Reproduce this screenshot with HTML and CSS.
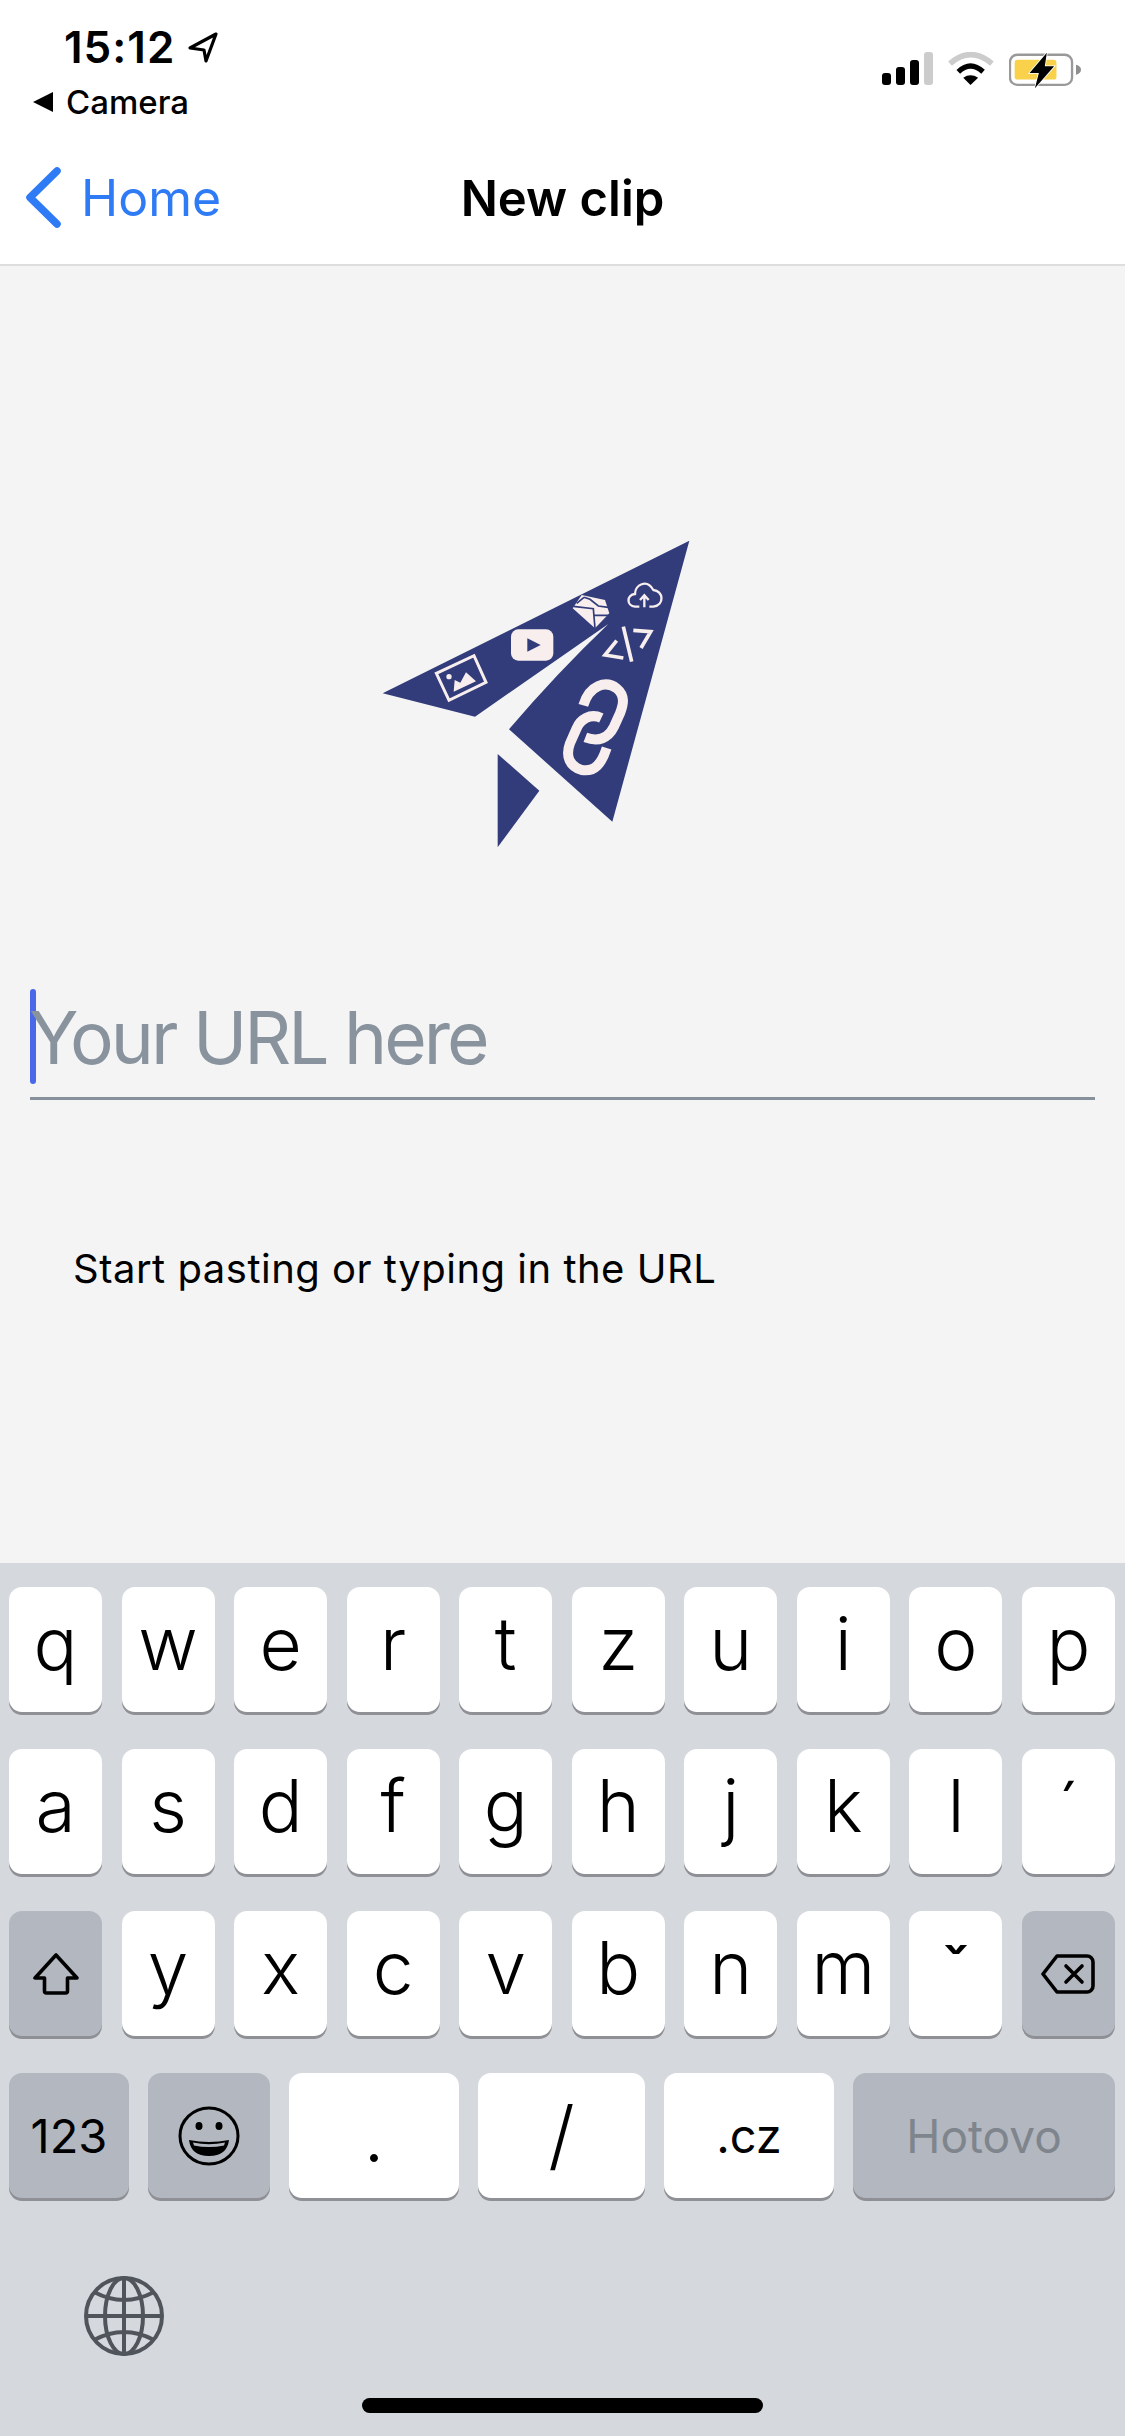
FILE: index.html
```html
<!DOCTYPE html>
<html lang="en">
<head>
  <meta charset="UTF-8">
  <title>New clip</title>
  <link rel="stylesheet" href="styles.css">
</head>
<body>
  <div class="screen">
    <header class="top">
      <div class="status">
        <div class="status-left">
          <div class="time-row">
            <span class="time">15:12</span>
            <svg class="loc" viewBox="0 0 32 32"><path d="M29 3 3 17l14 2 2 11z" fill="none" stroke="#000" stroke-width="3.2" stroke-linejoin="round"/></svg>
          </div>
          <div class="back-app">
            <svg class="back-tri" viewBox="0 0 20 20"><path d="M20 0v20L0 10z" fill="#000"/></svg>
            <span>Camera</span>
          </div>
        </div>
        <div class="status-icons">
          <div class="signal">
            <i class="bar bar1"></i><i class="bar bar2"></i><i class="bar bar3"></i><i class="bar bar4"></i>
          </div>
          <svg class="wifi" viewBox="295 65 137 100">
            <path d="M300 100Q362 46 427 100" fill="none" stroke="#ccc" stroke-width="17"/>
            <path d="M325 125Q362 90 400 125" fill="none" stroke="#000" stroke-width="16"/>
            <path d="M340 143Q362 128 385 143L362 165z" fill="#000"/>
          </svg>
          <svg class="battery" viewBox="478 62 220 108">
            <rect x="481" y="70" width="187" height="91" rx="22" fill="none" stroke="#999" stroke-width="7"/>
            <rect x="495" y="85" width="126" height="60" rx="9" fill="#f9d14a"/>
            <path d="M680 100q15 4 15 15t-15 15z" fill="#8f8f8f"/>
            <path d="M592 64 540 125h28l-12 46 58-66h-28z" fill="#000" stroke="#fff" stroke-width="5" paint-order="stroke"/>
          </svg>
        </div>
      </div>
      <nav class="nav">
        <a class="nav-back">
          <svg class="chevron" viewBox="0 0 36 61"><path d="M32 4 5 30.500 32 57" fill="none" stroke="#2f7bf6" stroke-width="7.500" stroke-linecap="round" stroke-linejoin="round"/></svg>
          <span>Home</span>
        </a>
        <h1 class="nav-title">New clip</h1>
      </nav>
    </header>

    <main class="content">
      <svg class="logo" viewBox="0 0 1050 1020">
        <path d="M68 520 988 62 757 905 447 628Q590 460 745 312L345 590z" fill="#323c7a"/>
        <path d="M413 702 538 812 413 982z" fill="#323c7a"/>
        <!-- picture -->
        <path d="M229 460 342 407 378 487 267 541z" fill="none" stroke="#f8eeee" stroke-width="9"/>
        <circle cx="267" cy="470" r="8" fill="#f8eeee"/>
        <path d="M281 515 284 480 301 488 318 457 348 484z" fill="#f8eeee"/>
        <!-- video -->
        <rect x="453" y="328" width="127" height="94" rx="22" fill="#f8eeee"/>
        <path d="M502 355 542 375 502 395z" fill="#323c7a"/>
        <!-- gem -->
        <path d="M665 225 735 240 748 280 705 325 638 265z" fill="#f8eeee"/>
        <path d="M640 259 700 266 705 325M704 286H748M672 232 690 238 715 258 745 262M650 250 672 232" fill="none" stroke="#323c7a" stroke-width="5"/>
        <!-- cloud -->
        <path d="M838 260H825C800 258 798 225 825 222 825 195 860 175 880 210 910 212 915 255 880 260H868" fill="none" stroke="#f8eeee" stroke-width="7"/>
        <path d="M853 262V228M840 240 853 226 866 240" fill="none" stroke="#f8eeee" stroke-width="7"/>
        <!-- code -->
        <path d="M770 362 735 405 790 414M790 320 815 425M820 331 872 335 843 384" fill="none" stroke="#f8eeee" stroke-width="11"/>
        <!-- chain -->
        <path d="M670 556C688 495 738 480 770 505 797 527 790 555 780 580L762 620C745 655 715 667 676 652" fill="none" stroke="#f8eeee" stroke-width="30"/>
        <path d="M724 594C690 578 660 600 650 625L630 670C615 710 630 740 665 750 705 757 725 730 740 684" fill="none" stroke="#f8eeee" stroke-width="30"/>
      </svg>

      <div class="url-field">
        <i class="caret"></i>
        <span class="placeholder">Your URL here</span>
      </div>
      <p class="hint">Start pasting or typing in the URL</p>
    </main>

    <section class="keyboard">
      <div class="row">
        <div class="key">q</div><div class="key">w</div><div class="key">e</div><div class="key">r</div><div class="key">t</div>
        <div class="key">z</div><div class="key">u</div><div class="key">i</div><div class="key">o</div><div class="key">p</div>
      </div>
      <div class="row">
        <div class="key">a</div><div class="key">s</div><div class="key">d</div><div class="key">f</div><div class="key">g</div>
        <div class="key">h</div><div class="key">j</div><div class="key">k</div><div class="key">l</div><div class="key acute">´</div>
      </div>
      <div class="row">
        <div class="key dark icon">
          <svg class="shift" viewBox="0 0 46 42"><path d="M23 2 2 25h9.500v13a2 2 0 0 0 2 2h19a2 2 0 0 0 2-2V25H44z" fill="none" stroke="#000" stroke-width="3.600" stroke-linejoin="round"/></svg>
        </div>
        <div class="key">y</div><div class="key">x</div><div class="key">c</div><div class="key">v</div><div class="key">b</div>
        <div class="key">n</div><div class="key">m</div>
        <div class="key caron">ˇ</div>
        <div class="key dark icon">
          <svg class="delete" viewBox="0 0 54 40"><path d="M16 2H46a6 6 0 0 1 6 6V32a6 6 0 0 1-6 6H16L2 20z" fill="none" stroke="#000" stroke-width="3.600" stroke-linejoin="round"/><path d="M25 12 41 28M41 12 25 28" stroke="#000" stroke-width="3.600" stroke-linecap="round"/></svg>
        </div>
      </div>
      <div class="row row-bottom">
        <div class="key dark small w-num">123</div>
        <div class="key dark icon w-emoji">
          <svg class="emoji" viewBox="0 0 62 60">
            <ellipse cx="31" cy="30" rx="29" ry="28" fill="none" stroke="#000" stroke-width="3"/>
            <ellipse cx="21" cy="20" rx="3.500" ry="4" fill="#000"/>
            <ellipse cx="41" cy="20" rx="3.500" ry="4" fill="#000"/>
            <path d="M11 34Q31 38 51 34 49 50 31 50 13 50 11 34z" fill="#000"/>
            <path d="M15 36.500Q31 40 47 36.500L46 39.500Q31 42.500 16 39.500z" fill="#b3b7c0"/>
          </svg>
        </div>
        <div class="key punct w-dot">.</div>
        <div class="key punct w-slash">/</div>
        <div class="key small w-cz">.cz</div>
        <div class="key dark small done w-done">Hotovo</div>
      </div>
      <div class="kb-bottom">
        <svg class="globe" viewBox="0 0 80 80">
          <g fill="none" stroke="#50555c" stroke-width="4">
            <circle cx="40" cy="40" r="38"/>
            <ellipse cx="40" cy="40" rx="19" ry="38"/>
            <path d="M40 2V78M2 40H78M10 16Q40 32 70 16M10 64Q40 48 70 64"/>
          </g>
        </svg>
        <i class="home-bar"></i>
      </div>
    </section>
  </div>
</body>
</html>
```

FILE: styles.css
```css
body {
  margin: 0;
  font-family: Inter, "Liberation Sans", sans-serif;
  color: #000;
}
.screen {
  width: 1125px;
  height: 2436px;
  display: flex;
  flex-direction: column;
  background: #f4f4f4;
  overflow: hidden;
}

/* status bar + nav */
.top {
  height: 264px;
  background: #fff;
  border-bottom: 2px solid #dedede;
}
.status {
  height: 130px;
  display: flex;
  justify-content: space-between;
}
.status-left {
  padding: 25px 0 0 33px;
}
.time-row {
  display: flex;
  align-items: center;
  gap: 12px;
  padding-left: 31px;
}
.time {
  font-size: 44px;
  line-height: 44px;
  font-weight: 600;
  letter-spacing: 1px;
}
.loc {
  width: 32px;
  height: 32px;
}
.back-app {
  display: flex;
  align-items: center;
  gap: 13px;
  margin-top: 13px;
  font-size: 33px;
  line-height: 40px;
  font-weight: 500;
}
.back-tri {
  width: 20px;
  height: 20px;
}
.status-icons {
  display: flex;
  align-items: flex-start;
  padding: 52px 43px 0 0;
  gap: 15px;
}
.signal {
  display: flex;
  align-items: flex-end;
  gap: 5px;
  height: 33px;
}
.bar {
  width: 9px;
  border-radius: 3px;
  background: #000;
}
.bar1 { height: 12px; }
.bar2 { height: 18px; }
.bar3 { height: 25px; }
.bar4 { height: 33px; background: #ccc; }
.wifi {
  width: 46px;
  height: 33px;
}
.battery {
  width: 73px;
  height: 36px;
}
.nav {
  height: 134px;
  box-sizing: border-box;
  padding-top: 2px;
  display: flex;
  align-items: center;
  justify-content: center;
  position: relative;
}
.nav-back {
  position: absolute;
  left: 25px;
  top: 37px;
  display: flex;
  align-items: center;
  gap: 20px;
  color: #2f7bf6;
  font-size: 50px;
}
.chevron {
  width: 36px;
  height: 61px;
}
.nav-title {
  margin: 0;
  font-size: 49px;
  font-weight: 600;
}

/* main */
.content {
  flex: 1;
}
.logo {
  display: block;
  width: 350px;
  height: 340px;
  margin: 254px 0 0 360px;
}
.url-field {
  display: flex;
  height: 108px;
  margin: 129px 30px 0;
  border-bottom: 3px solid #87919c;
}
.caret {
  width: 6px;
  height: 95px;
  border-radius: 3px;
  background: #4a68e8;
}
.placeholder {
  margin: 5px 0 0 -7px;
  font-size: 73px;
  line-height: 88px;
  color: #89939e;
  letter-spacing: -3px;
}
.hint {
  margin: 145px 0 0 73px;
  font-size: 40px;
  line-height: 48px;
  letter-spacing: 0.5px;
}

/* keyboard */
.keyboard {
  height: 873px;
  box-sizing: border-box;
  padding-top: 24px;
  background: #d5d8dd;
}
.row {
  display: flex;
  gap: 19.5px;
  padding: 0 10px 0 9px;
  margin-bottom: 37px;
}
.row-bottom {
  gap: 19px;
  margin-bottom: 0;
}
.key {
  flex: 1;
  height: 125px;
  box-sizing: border-box;
  padding-bottom: 12px;
  display: flex;
  align-items: center;
  justify-content: center;
  border-radius: 13px;
  background: #fff;
  box-shadow: 0 3px 0 #8e9095;
  font-size: 73px;
  font-weight: 300;
}
.key.dark {
  background: #b3b7c0;
}
.key.icon {
  padding-bottom: 0;
}
.key.small {
  flex: none;
  padding-bottom: 0;
  font-size: 47px;
  font-weight: 400;
}
.key.punct {
  flex: none;
  padding-bottom: 3px;
  font-size: 76px;
}
.key.acute {
  padding-top: 8px;
}
.key.caron {
  align-items: flex-start;
  font-size: 64px;
  line-height: 120px;
  font-weight: 500;
}
.key.done {
  font-size: 46px;
  color: #7f858c;
}
.w-num { width: 120px; }
.w-emoji { flex: none; width: 122px; }
.w-dot { width: 170px; }
.w-slash { width: 167px; }
.w-cz { width: 170px; }
.w-done { width: 262px; }
.shift {
  width: 46px;
  height: 42px;
}
.delete {
  width: 54px;
  height: 40px;
}
.emoji {
  width: 62px;
  height: 60px;
}
.kb-bottom {
  display: flex;
  align-items: flex-start;
  margin-top: 78px;
  padding-left: 84px;
}
.globe {
  width: 80px;
  height: 80px;
}
.home-bar {
  width: 401px;
  height: 15px;
  margin: 122px 0 0 198px;
  border-radius: 8px;
  background: #000;
}
```
